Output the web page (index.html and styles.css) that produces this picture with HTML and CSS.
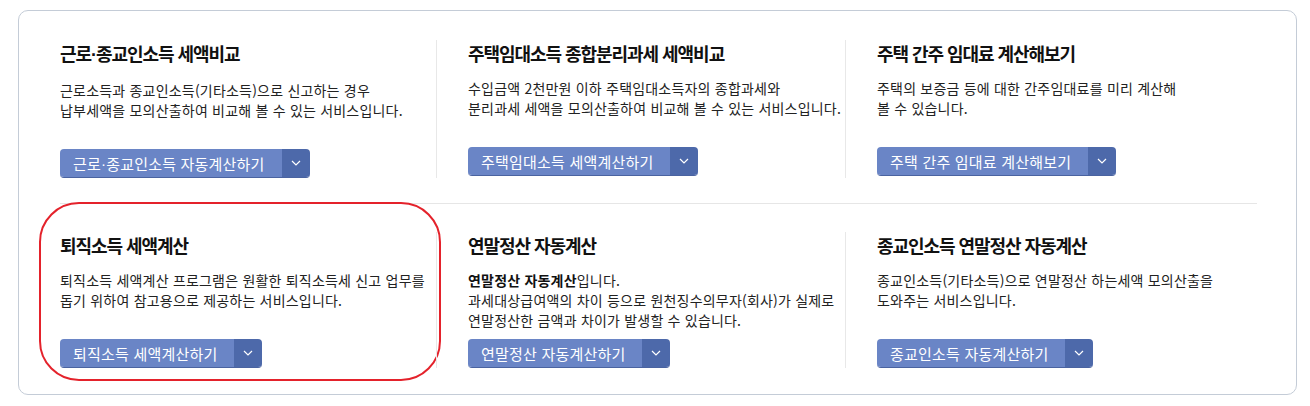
FILE: index.html
```html
<!DOCTYPE html>
<html lang="ko">
<head>
  <meta charset="utf-8">
  <title>세액계산 서비스</title>
  <link rel="stylesheet" href="styles.css">
</head>
<body>
  <div class="service-box">
    <ul class="service-row">
      <li class="service-item">
        <h3 class="service-title">근로<span class="dot">·</span>종교인소득 세액비교</h3>
        <p class="service-desc">근로소득과 종교인소득(기타소득)으로 신고하는 경우<br>납부세액을 모의산출하여 비교해 볼 수 있는 서비스입니다.</p>
        <div class="btn-group">
          <a href="#" class="btn-main">근로<span class="dot">·</span>종교인소득 자동계산하기</a>
          <button type="button" class="btn-toggle"><svg width="10" height="6" viewBox="0 0 10 6"><path d="M1 1l4 4 4-4" fill="none" stroke="#fff" stroke-width="1.2"/></svg></button>
        </div>
      </li>
      <li class="service-item">
        <h3 class="service-title">주택임대소득 종합분리과세 세액비교</h3>
        <p class="service-desc">수입금액 2천만원 이하 주택임대소득자의 종합과세와<br>분리과세 세액을 모의산출하여 비교해 볼 수 있는 서비스입니다.</p>
        <div class="btn-group">
          <a href="#" class="btn-main">주택임대소득 세액계산하기</a>
          <button type="button" class="btn-toggle"><svg width="10" height="6" viewBox="0 0 10 6"><path d="M1 1l4 4 4-4" fill="none" stroke="#fff" stroke-width="1.2"/></svg></button>
        </div>
      </li>
      <li class="service-item">
        <h3 class="service-title">주택 간주 임대료 계산해보기</h3>
        <p class="service-desc">주택의 보증금 등에 대한 간주임대료를 미리 계산해<br>볼 수 있습니다.</p>
        <div class="btn-group">
          <a href="#" class="btn-main">주택 간주 임대료 계산해보기</a>
          <button type="button" class="btn-toggle"><svg width="10" height="6" viewBox="0 0 10 6"><path d="M1 1l4 4 4-4" fill="none" stroke="#fff" stroke-width="1.2"/></svg></button>
        </div>
      </li>
    </ul>

    <hr class="row-line">

    <ul class="service-row">
      <li class="service-item highlight">
        <h3 class="service-title">퇴직소득 세액계산</h3>
        <p class="service-desc">퇴직소득 세액계산 프로그램은 원활한 퇴직소득세 신고 업무를<br>돕기 위하여 참고용으로 제공하는 서비스입니다.</p>
        <div class="btn-group">
          <a href="#" class="btn-main">퇴직소득 세액계산하기</a>
          <button type="button" class="btn-toggle"><svg width="10" height="6" viewBox="0 0 10 6"><path d="M1 1l4 4 4-4" fill="none" stroke="#fff" stroke-width="1.2"/></svg></button>
        </div>
      </li>
      <li class="service-item">
        <h3 class="service-title">연말정산 자동계산</h3>
        <p class="service-desc"><strong>연말정산 자동계산</strong>입니다.<br>과세대상급여액의 차이 등으로 원천징수의무자(회사)가 실제로<br>연말정산한 금액과 차이가 발생할 수 있습니다.</p>
        <div class="btn-group">
          <a href="#" class="btn-main">연말정산 자동계산하기</a>
          <button type="button" class="btn-toggle"><svg width="10" height="6" viewBox="0 0 10 6"><path d="M1 1l4 4 4-4" fill="none" stroke="#fff" stroke-width="1.2"/></svg></button>
        </div>
      </li>
      <li class="service-item">
        <h3 class="service-title">종교인소득 연말정산 자동계산</h3>
        <p class="service-desc">종교인소득(기타소득)으로 연말정산 하는세액 모의산출을<br>도와주는 서비스입니다.</p>
        <div class="btn-group">
          <a href="#" class="btn-main">종교인소득 자동계산하기</a>
          <button type="button" class="btn-toggle"><svg width="10" height="6" viewBox="0 0 10 6"><path d="M1 1l4 4 4-4" fill="none" stroke="#fff" stroke-width="1.2"/></svg></button>
        </div>
      </li>
    </ul>
  </div>
</body>
</html>
```

FILE: styles.css
```css
body {
  margin: 0;
  padding: 10px 13px 0 18px;
  background-color: #fff;
  font-family: "Noto Sans CJK KR", "Noto Sans", sans-serif;
  color: #222;
}

.service-box {
  border: 1px solid #c4ccd7;
  border-radius: 10px;
  padding: 29px 0 26px 8px;
  background-color: #fff;
}

.service-row {
  display: grid;
  grid-template-columns: 409px 409px 409px;
  margin: 0;
  padding: 0;
  list-style: none;
}

.service-item {
  position: relative;
  display: flex;
  flex-direction: column;
  align-items: flex-start;
  padding-left: 31px;
  border-left: 1px solid #e8e8e8;
}

.service-item:first-child {
  padding-left: 33px;
  border-left: none;
}

/* red highlight round the retirement item */
.service-item.highlight::after {
  content: "";
  position: absolute;
  left: 12px;
  top: -30px;
  width: 398px;
  height: 175px;
  border: 2px solid #e4222b;
  border-radius: 40px;
  pointer-events: none;
}

.dot {
  font-family: "Liberation Sans", sans-serif;
}

.service-title {
  margin: 0;
  font-size: 18px;
  line-height: 26px;
  font-weight: bold;
  letter-spacing: -1.05px;
  color: #111;
}

.service-desc {
  margin: 12px 0 0;
  min-height: 60px;
  font-size: 14px;
  line-height: 20px;
  letter-spacing: 0.2px;
  color: #222;
}

.service-desc strong {
  font-weight: bold;
  color: #111;
}

.btn-group {
  display: flex;
  margin-top: 9px;
  height: 29px;
  border-radius: 4px;
  overflow: hidden;
  border-bottom: 1px solid #4a63a0;
  box-sizing: border-box;
}

.btn-main {
  display: flex;
  align-items: center;
  padding: 0 17px 0 13px;
  background-color: #6a85c6;
  color: #fff;
  font-size: 15px;
  letter-spacing: 0.2px;
  text-decoration: none;
  white-space: nowrap;
}

.btn-toggle {
  display: flex;
  align-items: center;
  justify-content: center;
  width: 28px;
  padding: 0;
  border: none;
  background-color: #4d69aa;
  cursor: pointer;
}

.row-line {
  margin: 25px 0 28px 33px;
  width: 1197px;
  height: 0;
  border: none;
  border-top: 1px solid #e6e6e6;
}
```
